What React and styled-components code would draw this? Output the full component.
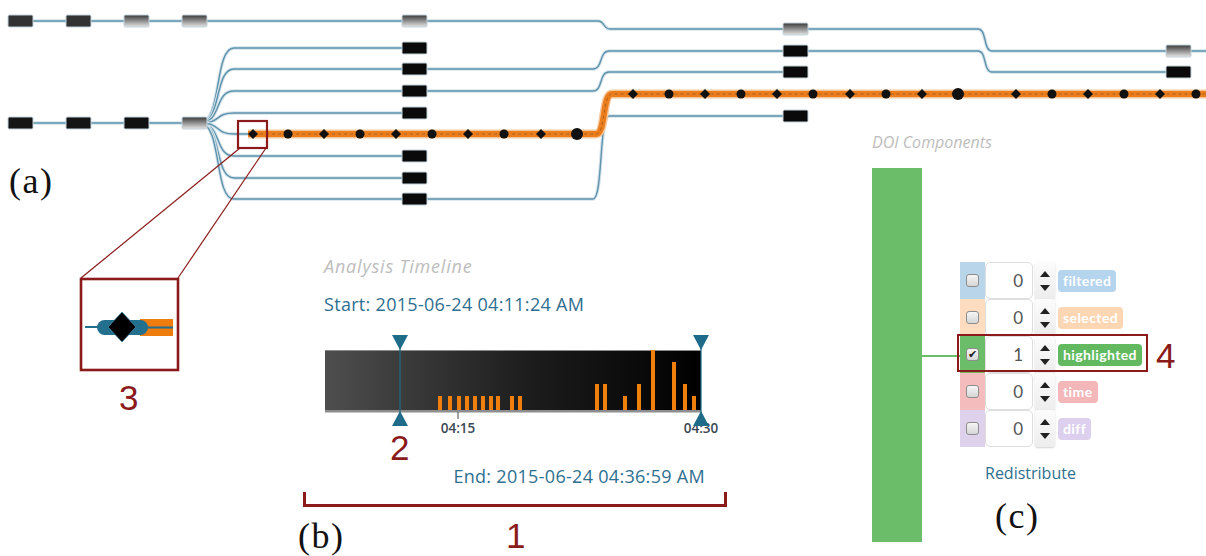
import React from "react";
import styled, { createGlobalStyle } from "styled-components";

const RED = "#8b1a1a";
const TEAL = "#2f6f8f";
const HANDLE = "#1f6b8a";

const GlobalStyle = createGlobalStyle`
  body {
    margin: 0;
    background: #fff;
  }
`;

const Figure = styled.div`
  position: relative;
  width: 1206px;
  height: 556px;
  overflow: hidden;
  background: #fff;
  font-family: "Open Sans", Lato, sans-serif;
`;

const Drawing = styled.svg`
  position: absolute;
  left: 0;
  top: 0;
  pointer-events: none;
`;

const Paren = styled.span`
  position: absolute;
  left: ${(p) => p.$x}px;
  top: ${(p) => p.$y}px;
  font-family: "Liberation Serif", "DejaVu Serif", serif;
  font-size: 36px;
  letter-spacing: 1.5px;
  line-height: 1;
  color: #111;
`;

const Marker = styled.span`
  position: absolute;
  left: ${(p) => p.$x}px;
  top: ${(p) => p.$y}px;
  font-family: "Liberation Sans", Arial, sans-serif;
  font-size: 35px;
  line-height: 1;
  color: ${RED};
`;

const Bracket = styled.div`
  position: absolute;
  left: 303px;
  top: 492px;
  width: 418px;
  height: 12px;
  border: 3px solid ${RED};
  border-top: none;
`;

const Highlight = styled.div`
  position: absolute;
  left: 957px;
  top: 334px;
  width: 187px;
  height: 34px;
  border: 2.5px solid ${RED};
`;

/* ---------- timeline panel ---------- */

const Timeline = styled.section`
  position: absolute;
  left: 324px;
  top: 255px;
  width: 381px;
  display: flex;
  flex-direction: column;
`;

const PanelTitle = styled.h3`
  margin: 0;
  font-size: ${(p) => p.$size || 18}px;
  font-style: italic;
  font-weight: 400;
  letter-spacing: ${(p) => (p.$size ? 0 : 0.8)}px;
  line-height: ${(p) => (p.$size ? 20 : 22)}px;
  color: #bdbdbd;
  white-space: nowrap;
`;

const Stamp = styled.div`
  font-size: 18px;
  line-height: 22px;
  letter-spacing: 0.3px;
  color: ${TEAL};
  margin-top: ${(p) => p.$gap}px;
  text-align: ${(p) => (p.$right ? "right" : "left")};
  white-space: nowrap;
`;

const Chart = styled.svg`
  display: block;
  margin-top: 19px;
  overflow: visible;
`;

const bars = [
  [114, 14], [124, 14], [133, 14], [141, 14], [149, 14], [157, 14], [165, 14], [172, 14],
  [186, 14], [194, 14], [271, 26], [279, 26], [299, 14], [313, 26], [327, 60], [348, 48],
  [359, 26], [368, 14],
];

function Handle({ x }) {
  return (
    <g fill={HANDLE}>
      <line x1={x} y1={2} x2={x} y2={91} stroke={HANDLE} strokeWidth="1.2" />
      <polygon points={`${x - 8},1 ${x + 8},1 ${x},16`} />
      <polygon points={`${x},77 ${x - 8},92 ${x + 8},92`} />
    </g>
  );
}

function TimelineChart() {
  const label = { textAnchor: "middle", fontSize: 13.5, fontWeight: 600, fill: "#3a4753", fontFamily: "Open Sans, sans-serif" };
  return (
    <Chart width="400" height="102">
      <defs>
        <linearGradient id="tl" x1="0" x2="1" y1="0" y2="0">
          <stop offset="0" stopColor="#4e4e4e" />
          <stop offset="0.55" stopColor="#1c1c1c" />
          <stop offset="1" stopColor="#000" />
        </linearGradient>
      </defs>
      <rect x="1" y="16" width="376" height="62" fill="url(#tl)" />
      <rect x="1" y="16" width="376" height="1" fill="#8a8a8a" />
      <rect x="1" y="76" width="376" height="2.5" fill="#8d8d8d" />
      {bars.map(([x, h]) => (
        <rect key={x} x={x} y={76 - h} width="4" height={h} fill="#f07f0c" />
      ))}
      <line x1="134" y1="78" x2="134" y2="85" stroke="#444" strokeWidth="1" />
      <text x="134" y="99" {...label}>04:15</text>
      <text x="377" y="99" {...label}>04:30</text>
      <Handle x={76} />
      <Handle x={377} />
    </Chart>
  );
}

/* ---------- DOI panel ---------- */

const Doi = styled.section`
  position: absolute;
  left: 872px;
  top: 132px;
  display: flex;
  flex-direction: column;
`;

const DoiBody = styled.div`
  display: flex;
  align-items: flex-start;
  margin-top: 16px;
`;

const WeightBar = styled.div`
  width: 50px;
  height: 374px;
  background: #6bbd6a;
  flex-shrink: 0;
`;

const Controls = styled.div`
  margin-left: 38px;
  margin-top: 94px;
  display: flex;
  flex-direction: column;
`;

const Row = styled.div`
  position: relative;
  display: flex;
  height: 37px;

  &::before {
    content: "";
    display: ${(p) => (p.$linked ? "block" : "none")};
    position: absolute;
    left: -38px;
    top: 19px;
    width: 38px;
    height: 2px;
    background: #6bbd6a;
  }
`;

const Swatch = styled.div`
  width: 25px;
  background: ${(p) => p.$color};
  display: flex;
  align-items: center;
  justify-content: center;
`;

const Check = styled.span`
  width: 13px;
  height: 13px;
  box-sizing: border-box;
  border: 1px solid #8d8d8d;
  border-radius: 3px;
  background: linear-gradient(#f6f6f6, #d6d6d6);
  display: flex;
  align-items: center;
  justify-content: center;
  font-size: 11px;
  line-height: 1;
  color: #222;
  font-family: "DejaVu Sans", sans-serif;
`;

const Field = styled.div`
  width: 48px;
  box-sizing: border-box;
  background: #fff;
  border: 1px solid #dedede;
  border-radius: 5px;
  text-align: right;
  padding-right: 9px;
  font-family: Lato, sans-serif;
  font-size: 17px;
  line-height: 35px;
  color: #555;
`;

const Spinner = styled.div`
  width: 20px;
  margin-left: 2px;
  display: flex;
  flex-direction: column;
  align-items: center;
  justify-content: center;
  gap: 8px;
  border-radius: 3px;
  background: linear-gradient(#fcfcfc, #ededed);
  box-shadow: 0 1px 2px rgba(0, 0, 0, 0.18);
`;

const Arrow = styled.span`
  width: 0;
  height: 0;
  border-left: 5px solid transparent;
  border-right: 5px solid transparent;
  ${(p) => (p.$up ? "border-bottom" : "border-top")}: 6px solid #222;
`;

const Badge = styled.span`
  align-self: center;
  margin-left: 3px;
  height: 22px;
  padding: 0 5px;
  border-radius: 4px;
  background: ${(p) => p.$color};
  color: #fff;
  font-family: Lato, sans-serif;
  font-size: 14px;
  font-weight: 700;
  line-height: 22px;
  letter-spacing: 0.4px;
`;

const Redistribute = styled.div`
  margin-top: 16px;
  margin-left: 25px;
  font-size: 16px;
  line-height: 20px;
  color: ${TEAL};
`;

const components = [
  { name: "filtered", cell: "#b9d5ea", badge: "#b5d4ee", value: 0 },
  { name: "selected", cell: "#fddcc0", badge: "#fdd6b4", value: 0 },
  { name: "highlighted", cell: "#6bbd6a", badge: "#62b960", value: 1, on: true },
  { name: "time", cell: "#f4bcbd", badge: "#f3b6b9", value: 0 },
  { name: "diff", cell: "#ddd1eb", badge: "#dcd0ee", value: 0 },
];

/* ---------- provenance tree drawing ---------- */

const grayNodes = [
  [8, 15, "#333"], [66, 15, "#333"], [124, 15, "g"], [182, 15, "g"], [402, 15, "g"],
  [783, 23, "g"], [1166, 45, "g"], [783, 45, "#0a0a0a"], [1166, 66, "#0a0a0a"],
  [8, 117, "#151515"], [66, 117, "#151515"], [124, 117, "#111"], [182, 117, "g"],
  [783, 66, "#0a0a0a"], [783, 110, "#0a0a0a"],
];

const fanYs = [48, 69, 91, 113, 156, 178, 199];

const dots1 = [253, 288, 324, 360, 396, 432, 468, 504, 541, 577];
const dots2 = [633, 669, 705, 741, 777, 813, 850, 886, 922, 958, 1016, 1052, 1088, 1124, 1160, 1196];

function Dot({ x, y, i, big }) {
  if (big) return <circle cx={x} cy={y} r="6" fill="#111" />;
  if (i % 2 === 0)
    return <polygon points={`${x - 5},${y} ${x},${y - 5} ${x + 5},${y} ${x},${y + 5}`} fill="#111" />;
  return <circle cx={x} cy={y} r="4.5" fill="#111" />;
}

function Edge({ d }) {
  return (
    <g fill="none">
      <path d={d} stroke="#d5e3ea" strokeWidth="3.5" />
      <path d={d} stroke="#5e93ad" strokeWidth="1.4" />
    </g>
  );
}

function Node({ x, y, fill }) {
  return (
    <rect
      x={x}
      y={y}
      width="25"
      height="12"
      rx="1.5"
      fill={fill === "g" ? "url(#nodeGrad)" : fill}
      stroke="#c5d3db"
      strokeWidth="1"
    />
  );
}

function Tree() {
  const fan = (y, end) => `M 200 123 C 222 123, 214 ${y}, 234 ${y} H ${end}`;
  const orange = "M 248 134 H 596 C 606 134, 602 94, 612 94 H 1206";
  return (
    <Drawing width="1206" height="556">
      <defs>
        <linearGradient id="nodeGrad" x1="0" x2="0" y1="0" y2="1">
          <stop offset="0" stopColor="#3a3a3a" />
          <stop offset="1" stopColor="#e6e6e6" />
        </linearGradient>
      </defs>

      <Edge d="M 33 21 H 598 C 605 21, 603 29, 610 29 H 978 C 987 29, 983 51, 992 51 H 1206" />
      <Edge d="M 808 51 H 978 C 987 51, 983 72, 992 72 H 1166" />
      <Edge d="M 33 123 H 200" />
      {fanYs.map((y) => (
        <Edge key={y} d={fan(y, 402)} />
      ))}
      <Edge d={fan(134, 250)} />
      <Edge d="M 427 69 H 593 C 603 69, 599 51, 609 51 H 783" />
      <Edge d="M 427 91 H 593 C 603 91, 599 72, 609 72 H 783" />
      <Edge d="M 427 199 H 593 C 603 199, 599 116, 609 116 H 783" />

      <path d={orange} fill="none" stroke="#f6c79c" strokeWidth="9" />
      <path d={orange} fill="none" stroke="#ec7d1c" strokeWidth="6" />
      <path d={orange} fill="none" stroke="#9a5a22" strokeWidth="0.8" strokeDasharray="3 3" />

      {grayNodes.map(([x, y, f]) => (
        <Node key={`${x}-${y}`} x={x} y={y} fill={f} />
      ))}
      {fanYs.map((y) => (
        <Node key={y} x={402} y={y - 6} fill="#0a0a0a" />
      ))}

      {dots1.map((x, i) => (
        <Dot key={x} x={x} y={134} i={i} big={x === 577} />
      ))}
      {dots2.map((x, i) => (
        <Dot key={x} x={x} y={94} i={i} big={x === 958} />
      ))}

      {/* callout to the magnified node */}
      <rect x="238" y="121" width="29" height="27" fill="none" stroke={RED} strokeWidth="2.2" />
      <line x1="240" y1="148" x2="81" y2="278" stroke={RED} strokeWidth="1.2" />
      <line x1="266" y1="148" x2="178" y2="278" stroke={RED} strokeWidth="1.2" />
      <rect x="81" y="279" width="97" height="91" fill="#fff" stroke={RED} strokeWidth="2.6" />
      <line x1="85" y1="327" x2="100" y2="327" stroke="#236f8e" strokeWidth="2" />
      <rect x="140" y="319" width="33" height="17" fill="#ef7d0e" />
      <line x1="140" y1="327.5" x2="173" y2="327.5" stroke="#236f8e" strokeWidth="2" />
      <rect x="97" y="320" width="51" height="15" rx="7.5" fill="#236f8e" />
      <polygon points="108,327 122,312 136,327 122,342" fill="#000" stroke="#3f88a8" strokeWidth="0.8" />
    </Drawing>
  );
}

export default function App() {
  return (
    <>
      <GlobalStyle />
      <Figure>
        <Tree />

        <Timeline>
          <PanelTitle>Analysis Timeline</PanelTitle>
          <Stamp $gap={16}>Start: 2015-06-24 04:11:24 AM</Stamp>
          <TimelineChart />
          <Stamp $gap={29} $right>
            End: 2015-06-24 04:36:59 AM
          </Stamp>
        </Timeline>

        <Doi>
          <PanelTitle as="h4" $size={16}>DOI Components</PanelTitle>
          <DoiBody>
            <WeightBar />
            <Controls>
              {components.map((c) => (
                <Row key={c.name} $linked={c.on}>
                  <Swatch $color={c.cell}>
                    <Check>{c.on ? "✔" : ""}</Check>
                  </Swatch>
                  <Field>{c.value}</Field>
                  <Spinner>
                    <Arrow $up />
                    <Arrow />
                  </Spinner>
                  <Badge $color={c.badge}>{c.name}</Badge>
                </Row>
              ))}
              <Redistribute>Redistribute</Redistribute>
            </Controls>
          </DoiBody>
        </Doi>

        <Highlight />
        <Bracket />

        <Paren $x={9} $y={163}>(a)</Paren>
        <Paren $x={298} $y={518}>(b)</Paren>
        <Paren $x={995} $y={498}>(c)</Paren>

        <Marker $x={119} $y={380}>3</Marker>
        <Marker $x={390} $y={430}>2</Marker>
        <Marker $x={506} $y={518}>1</Marker>
        <Marker $x={1156} $y={338}>4</Marker>
      </Figure>
    </>
  );
}
